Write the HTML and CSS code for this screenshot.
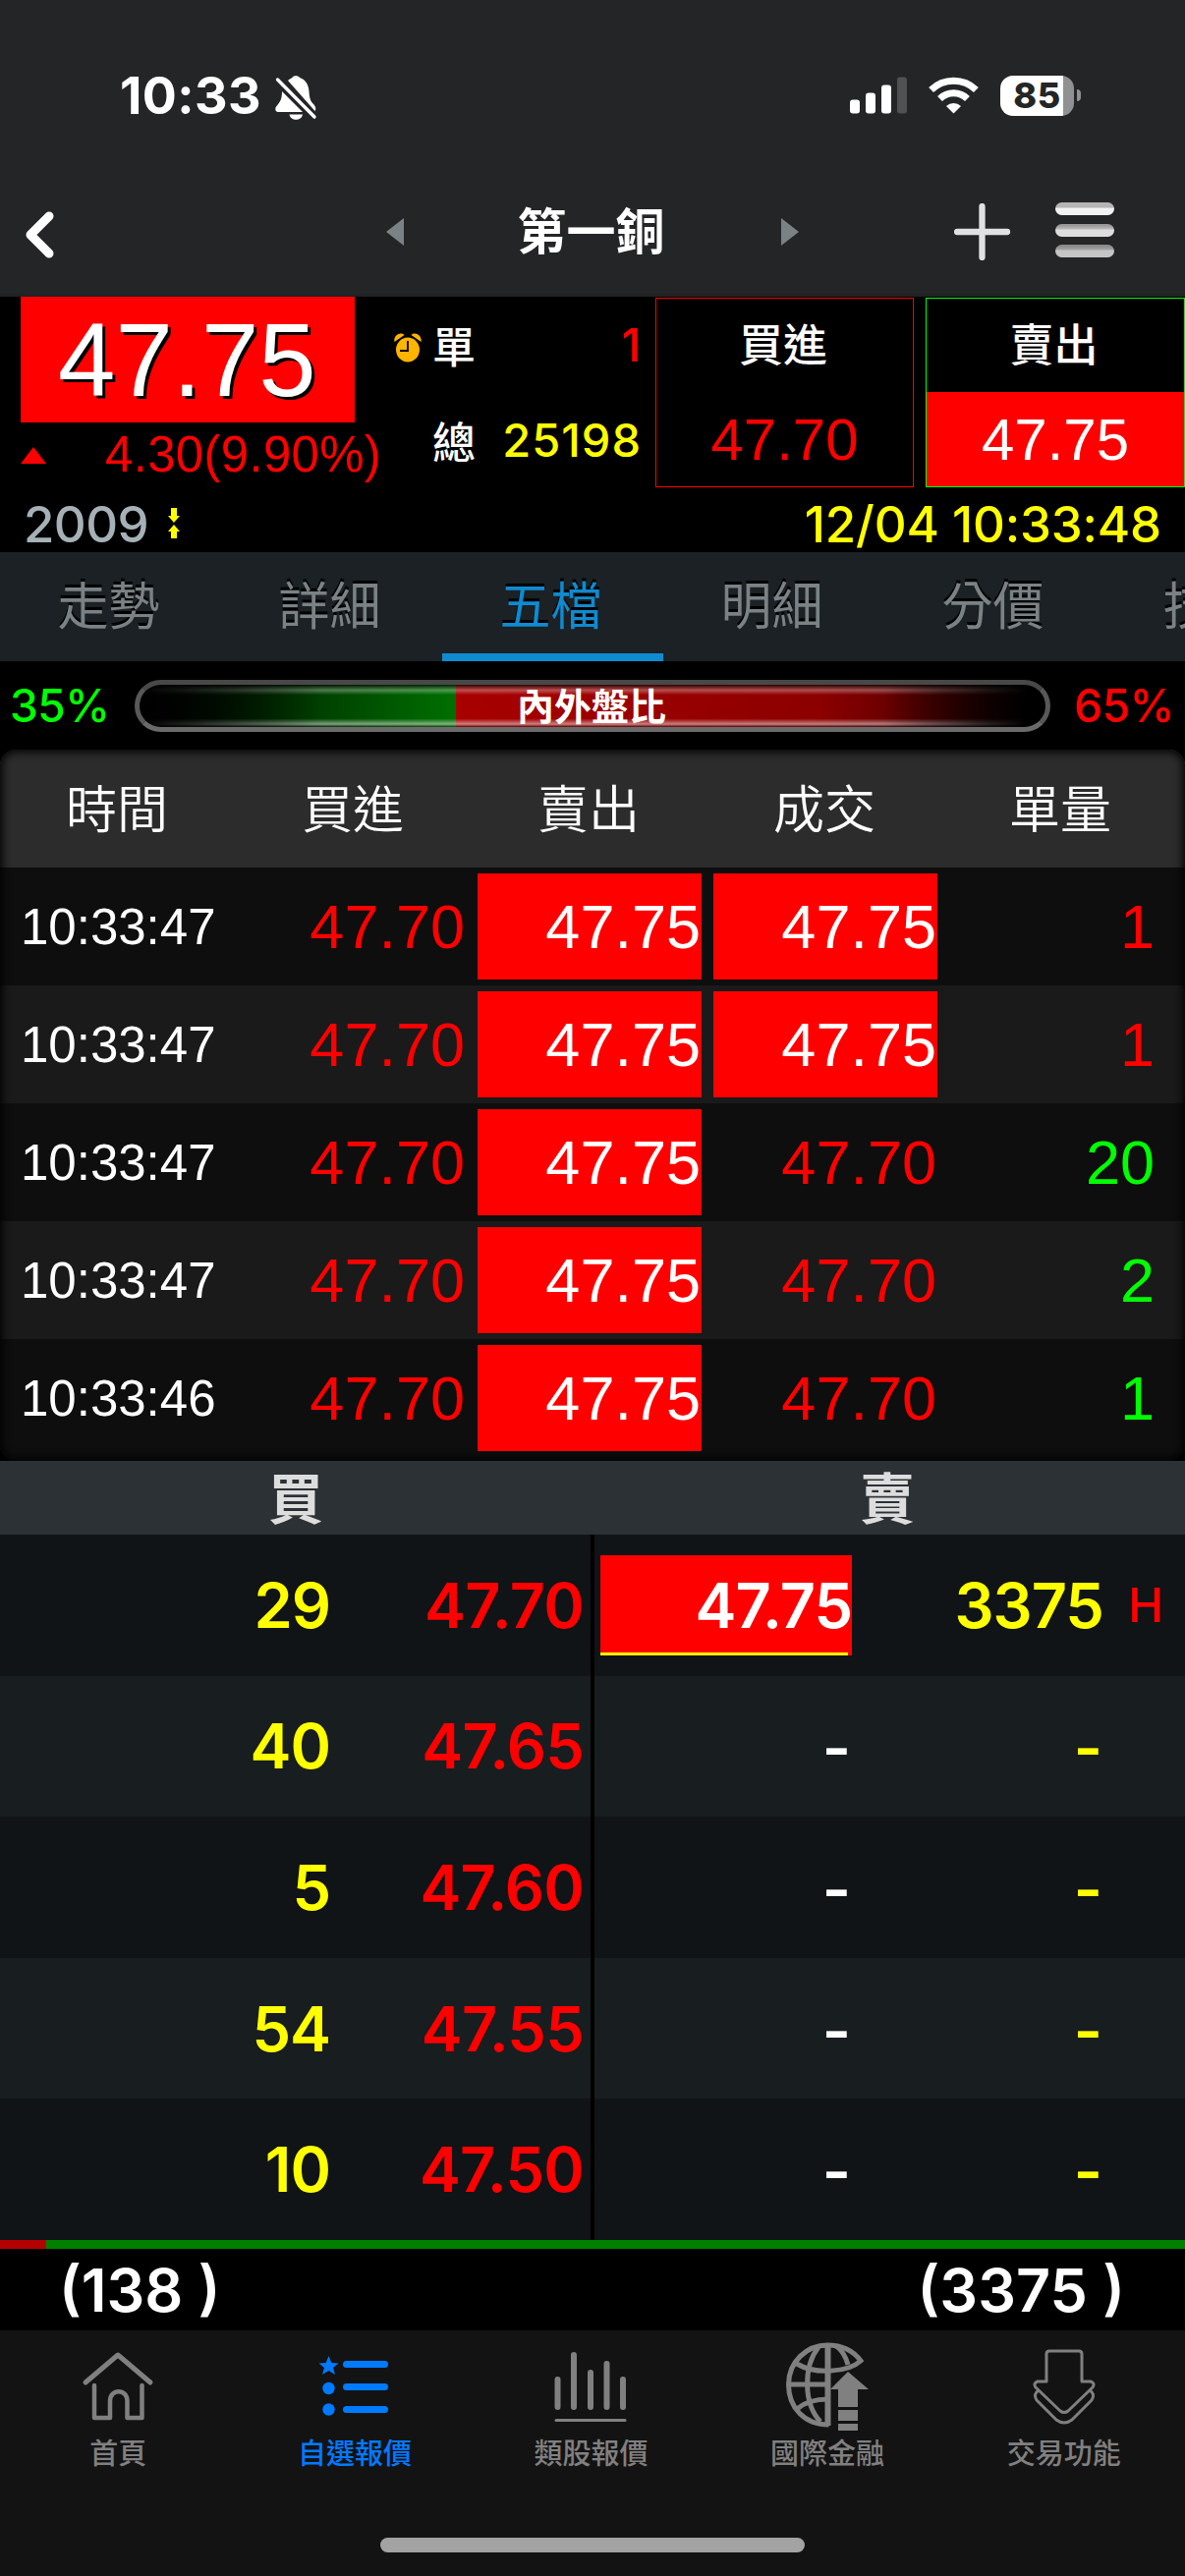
FILE: index.html
```html
<!DOCTYPE html>
<html lang="zh-Hant">
<head>
    <meta charset="UTF-8">
    <meta name="viewport" content="width=device-width, initial-scale=1.0">
    <title>第一銅</title>
    <link rel="stylesheet" href="styles.css">
</head>
<body>
    <header>
        <div class="status">
            <div class="clock">
                <span class="clock-time">10:33</span>
                <svg class="bell" width="44" height="46" viewBox="0 0 44 46">
                    <path fill="#fff" d="M14 6 C16 4 18 3.600 18.500 3 C19 0.500 25 0.500 26 3 C32 5 35 10 35.500 17 C36 24 37 27 40 30 C43 33 42.500 36 41.500 37 Z"/>
                    <path fill="#fff" d="M8 17 L29 38 L4 38 C1 38 0.500 34 2.500 32 C6 28 8 25 8 17 Z"/>
                    <path fill="#fff" d="M15.500 40.500 H29 C28 47.500 16.500 47.500 15.500 40.500 Z"/>
                    <path stroke="#232526" stroke-width="8" d="M3 4 L41 43"/>
                    <path stroke="#fff" stroke-width="3.400" stroke-linecap="round" d="M3.500 5 L41 43"/>
                </svg>
            </div>
            <div class="signals">
                <svg width="58" height="38" viewBox="0 0 58 38" fill="#fff">
                    <rect x="0" y="23.500" width="10" height="14" rx="3"/>
                    <rect x="16" y="16.500" width="10" height="21" rx="3"/>
                    <rect x="32" y="8.500" width="10" height="29" rx="3"/>
                    <rect x="48" y="0.500" width="10" height="37" rx="3" fill="#505153"/>
                </svg>
                <svg class="wifi" width="51" height="38" viewBox="0 0 51 38">
                    <g fill="none" stroke="#fff" stroke-width="7">
                        <path d="M2.600 13.500 A33 33 0 0 1 48.400 13.500"/>
                        <path d="M11.500 22.500 A20 20 0 0 1 39.500 22.500"/>
                    </g>
                    <path fill="#fff" d="M25.500 37.500 L18 30 A11 11 0 0 1 33 30 Z"/>
                </svg>
                <div class="battery"><span>85</span></div>
                <div class="battery-tip"></div>
            </div>
        </div>
        <nav class="title-bar">
            <svg class="back" width="32" height="50" viewBox="0 0 32 50">
                <path d="M25 6 L6 25 L25 44" fill="none" stroke="#fff" stroke-width="9" stroke-linecap="round" stroke-linejoin="round"/>
            </svg>
            <div class="stock">
                <i class="arrow-left"></i>
                <h1>第一銅</h1>
                <i class="arrow-right"></i>
            </div>
            <div class="actions">
                <svg width="58" height="58" viewBox="0 0 58 58">
                    <path d="M3 29 H54 M28.500 3 V55" stroke="#e1e1e1" stroke-width="6.300" stroke-linecap="round"/>
                </svg>
                <div class="menu">
                    <i class="menu-1"></i>
                    <i class="menu-2"></i>
                    <i class="menu-3"></i>
                </div>
            </div>
        </nav>
    </header>

    <!-- 報價 -->
    <section class="quote">
        <div class="quote-top">
            <div class="price">
                <div class="price-now">47.75</div>
                <div class="price-diff"><i class="up"></i><span>4.30(9.90%)</span></div>
            </div>
            <div class="volume">
                <div class="volume-row">
                    <svg width="28" height="30" viewBox="0 0 28 30">
                        <ellipse cx="14" cy="17" rx="12" ry="12.500" fill="#ffb400"/>
                        <path d="M0.500 9 C-1 3 6 -2 10.500 2 Z M27.500 9 C29 3 22 -2 17.500 2 Z" fill="#ffb400"/>
                        <path d="M14 8 V18 H6" fill="none" stroke="#000" stroke-width="1.800"/>
                    </svg>
                    <span class="label">單</span>
                    <span class="num red">1</span>
                </div>
                <div class="volume-row">
                    <span class="label">總</span>
                    <span class="num yellow">25198</span>
                </div>
            </div>
            <div class="side buy">
                <div class="side-name">買進</div>
                <div class="side-price">47.70</div>
            </div>
            <div class="side sell">
                <div class="side-name">賣出</div>
                <div class="side-price hit">47.75</div>
            </div>
        </div>
        <div class="quote-bottom">
            <span class="code">2009</span>
            <svg width="14" height="36" viewBox="0 0 14 36" fill="#ff0">
                <path d="M4 0 H10 V8 H13 L7 15 L1 8 H4 Z M4 31 H10 V24 H13 L7 17 L1 24 H4 Z"/>
            </svg>
            <span class="datetime">12/04 10:33:48</span>
        </div>
    </section>

    <nav class="tabs">
        <a>走勢</a>
        <a>詳細</a>
        <a class="active">五檔</a>
        <a>明細</a>
        <a>分價</a>
        <a>技術</a>
    </nav>

    <!-- 內外盤比 -->
    <section class="ratio">
        <span class="ratio-in">35%</span>
        <div class="ratio-bar"><b>內外盤比</b></div>
        <span class="ratio-out">65%</span>
    </section>

    <!-- 成交明細 -->
    <section class="ticks">
        <div class="tick head"><span>時間</span><span>買進</span><span>賣出</span><span>成交</span><span>單量</span></div>
        <div class="tick"><span class="time">10:33:47</span><span>47.70</span><span class="hit">47.75</span><span class="hit">47.75</span><span class="qty">1</span></div>
        <div class="tick"><span class="time">10:33:47</span><span>47.70</span><span class="hit">47.75</span><span class="hit">47.75</span><span class="qty">1</span></div>
        <div class="tick"><span class="time">10:33:47</span><span>47.70</span><span class="hit">47.75</span><span>47.70</span><span class="qty green">20</span></div>
        <div class="tick"><span class="time">10:33:47</span><span>47.70</span><span class="hit">47.75</span><span>47.70</span><span class="qty green">2</span></div>
        <div class="tick"><span class="time">10:33:46</span><span>47.70</span><span class="hit">47.75</span><span>47.70</span><span class="qty green">1</span></div>
    </section>

    <!-- 五檔 -->
    <section class="depth">
        <div class="depth-head"><span>買</span><span>賣</span></div>
        <div class="depth-body">
            <div class="bids">
                <div class="level"><span class="vol">29</span><span class="bid">47.70</span></div>
                <div class="level"><span class="vol">40</span><span class="bid">47.65</span></div>
                <div class="level"><span class="vol">5</span><span class="bid">47.60</span></div>
                <div class="level"><span class="vol">54</span><span class="bid">47.55</span></div>
                <div class="level"><span class="vol">10</span><span class="bid">47.50</span></div>
            </div>
            <div class="asks">
                <div class="level"><span class="ask full">47.75</span><span class="vol">3375</span><span class="high">H</span></div>
                <div class="level empty"><span class="ask">-</span><span class="vol">-</span></div>
                <div class="level empty"><span class="ask">-</span><span class="vol">-</span></div>
                <div class="level empty"><span class="ask">-</span><span class="vol">-</span></div>
                <div class="level empty"><span class="ask">-</span><span class="vol">-</span></div>
            </div>
        </div>
        <div class="depth-bar"><i style="width: 47px"></i></div>
        <div class="depth-sum"><span>(138 )</span><span>(3375 )</span></div>
    </section>

    <footer>
        <nav class="tabbar">
            <a>
                <svg width="90" height="92" viewBox="0 0 90 92" fill="none" stroke="#808080" stroke-width="5" stroke-linecap="round" stroke-linejoin="round">
                    <path d="M12 41 L45 13 L78 41"/>
                    <path stroke-width="4.500" d="M21 44 V77 H37 V60 C37 47 54.500 47 54.500 60 V77 H69.500 V44"/>
                </svg>
                <span>首頁</span>
            </a>
            <a class="active">
                <svg width="90" height="92" viewBox="0 0 90 92" fill="#007aff">
                    <path d="M18.500 14 L21.300 21 L28.500 21.500 L23 26 L25 33 L18.500 29 L12 33 L14 26 L8.500 21.500 L15.700 21 Z"/>
                    <ellipse cx="18.500" cy="47" rx="6.200" ry="6.200"/>
                    <ellipse cx="18.500" cy="68.500" rx="6.200" ry="6.200"/>
                    <rect x="33" y="19" width="46" height="7" rx="3.500"/>
                    <rect x="33" y="42" width="46" height="7" rx="3.500"/>
                    <rect x="33" y="65" width="46" height="7" rx="3.500"/>
                </svg>
                <span>自選報價</span>
            </a>
            <a>
                <svg width="90" height="92" viewBox="0 0 90 92" stroke="#808080" stroke-width="6" stroke-linecap="round">
                    <path d="M11.500 38 V66 M28 13 V66 M45 31 V66 M61.500 22 V66 M78 38 V66"/>
                    <path stroke-width="3" d="M10 79.500 H80"/>
                </svg>
                <span>類股報價</span>
            </a>
            <a>
                <svg width="90" height="92" viewBox="0 0 90 92" fill="none" stroke="#808080" stroke-width="5">
                    <path d="M46.500 84 C22 84 5.500 67 5.500 43 C5.500 20 24 3 45 3 C59 3 71 8 79 19 C66 31 32 33 14 22"/>
                    <path stroke-width="6" d="M45.500 1 V85"/>
                    <path d="M36 5 C21 24 20 62 38 81 M54 4 C60 8 64 16 66 23 M5 43 H46 M14 68 C22 61 34 58 46 58"/>
                    <path stroke="none" fill="#808080" d="M66 30 L87 48 H76 V66 H56 V48 H48 Z M56 69 H76 V80 H56 Z M56 83 H76 V90 H56 Z"/>
                </svg>
                <span>國際金融</span>
            </a>
            <a>
                <svg width="90" height="92" viewBox="0 0 90 92" fill="none" stroke="#808080" stroke-width="3" stroke-linejoin="round">
                    <path d="M30 9 H60 Q63 9 63 12 V40 H72 Q77 42 74 46 L49 70 Q45 73 41 70 L16 46 Q13 42 18 40 H27 V12 Q27 9 30 9 Z"/>
                    <path d="M19 49 Q13 53 17 59 L37 79 Q45 85 53 79 L73 59 Q77 53 71 49"/>
                </svg>
                <span>交易功能</span>
            </a>
        </nav>
        <div class="home-indicator"></div>
    </footer>
</body>
</html>
```
FILE: styles.css
```css
* {
    box-sizing: border-box;
}

body {
    margin: 0;
    width: 1206px;
    height: 2622px;
    overflow: hidden;
    background: #000;
    color: #fff;
    font-family: Inter, "Noto Sans CJK TC", sans-serif;
    display: flex;
    flex-direction: column;
}

svg {
    display: block;
    flex: none;
}

.red {
    color: #f00;
}

.yellow {
    color: #ff0;
}

/* 頂部 */
header {
    height: 302px;
    background: #232526;
    border-bottom: 3px solid #212224;
}

.status {
    height: 176px;
    padding: 76px 106px 0 122px;
    display: flex;
    justify-content: space-between;
    align-items: flex-start;
}

.clock {
    display: flex;
}

.clock-time {
    width: 157px;
    font-size: 52px;
    line-height: 44px;
    font-weight: 700;
    letter-spacing: 0.4px;
}

.signals {
    display: flex;
    align-items: center;
    height: 42px;
}

.wifi {
    margin-left: 22px;
}

.battery {
    margin-left: 22px;
    width: 75px;
    height: 41px;
    border-radius: 13px;
    background: linear-gradient(to right, #fff 64px, #909192 64px);
    color: #232526;
    font-size: 36px;
    line-height: 41px;
    font-weight: 800;
    letter-spacing: 0.5px;
    text-align: center;
}

.battery-tip {
    margin-left: 3px;
    width: 4px;
    height: 12px;
    border-radius: 0 4px 4px 0;
    background: #909192;
}

.title-bar {
    height: 120px;
    padding: 0 72px 0 25px;
    display: grid;
    grid-template-columns: 1fr 420px 1fr;
    align-items: center;
}

.back {
    margin-top: 6px;
}

.stock {
    display: flex;
    justify-content: space-between;
    align-items: center;
    position: relative;
    left: 23px;
}

.stock h1 {
    margin: 0 0 0 -2px;
    font-size: 50px;
    line-height: 60px;
    font-weight: 700;
}

.arrow-left,
.arrow-right {
    border: 14px solid transparent;
    border-width: 14px 0;
}

.arrow-left {
    border-right: 18px solid #7a8285;
}

.arrow-right {
    border-left: 18px solid #7a8285;
}

.actions {
    display: flex;
    justify-content: flex-end;
    gap: 45px;
}

.menu {
    width: 60px;
    margin-bottom: 2px;
    display: flex;
    flex-direction: column;
    justify-content: space-between;
    position: relative;
    top: -1px;
}

.menu i {
    height: 13px;
    border-radius: 7px;
}

.menu-1 {
    background: linear-gradient(#b5b5b5 40%, #f2f2f2 45%);
}

.menu-2 {
    background: linear-gradient(#979797 10%, #bbb 40%, #ddd 45%);
}

.menu-3 {
    background: linear-gradient(#8a8a8a 10%, #a5a5a5 40%, #c5c5c5 45%);
}

/* 報價 */
.quote {
    height: 260px;
}

.quote-top {
    height: 195px;
    display: flex;
}

.price {
    width: 401px;
    padding-left: 21px;
}

.price-now {
    width: 340px;
    height: 128px;
    background: #f00;
    font: 105px/130px "Liberation Sans", sans-serif;
    padding-left: 38px;
    text-shadow: 3px 3px 0 #000;
}

.price-diff {
    height: 66px;
    display: flex;
    align-items: center;
    color: #f00;
    font: 51px/66px "Liberation Sans", sans-serif;
    letter-spacing: 0.3px;
}

.price-diff span {
    margin-left: 60px;
}

.up {
    border: 13px solid transparent;
    border-width: 0 13px;
    border-bottom: 17px solid #f00;
}

.volume {
    width: 266px;
    padding-right: 14px;
}

.volume-row {
    height: 97px;
    display: flex;
    align-items: center;
}

.volume-row svg {
    margin: 7px -28px 0 0;
}

.label {
    margin-left: 39px;
    font-size: 44px;
    font-weight: 500;
}

.num {
    margin-left: auto;
    font-size: 47px;
    font-weight: 500;
    letter-spacing: 1px;
}

.side {
    width: 263px;
    height: 193px;
    margin: 1px 12px 0 0;
    border: 1px solid #f00;
    text-align: center;
}

.side.sell {
    width: 264px;
    margin-right: 0;
    border-color: #0f0;
}

.side-name {
    height: 95px;
    padding-right: 3px;
    font-size: 45px;
    line-height: 96px;
    font-weight: 500;
}

.side-price {
    height: 96px;
    color: #f00;
    font: 60px/98px "Liberation Sans", sans-serif;
}

.side-price.hit {
    background: #f00;
    color: #fff;
}

.quote-bottom {
    height: 65px;
    padding: 6px 24px 0 24px;
    display: flex;
    align-items: flex-start;
    font-size: 51px;
    line-height: 62px;
    font-weight: 500;
}

.quote-bottom svg {
    margin: 14px 0 0 19px;
}

.code {
    width: 127px;
    color: #a5b1b6;
    letter-spacing: -0.6px;
}

.datetime {
    margin-left: auto;
    color: #ff0;
    letter-spacing: -0.2px;
}

/* 分頁 */
.tabs {
    height: 111px;
    display: flex;
    overflow: hidden;
    background: #1b2124;
}

.tabs a {
    flex: 0 0 225px;
    padding-right: 4px;
    text-align: center;
    font-size: 52px;
    line-height: 112px;
    color: #7a8285;
    text-shadow: 0 -3px 0 #000;
}

.tabs .active {
    color: #0f8bd0;
    border-bottom: 8px solid #0f8bd0;
}

.ratio {
    height: 90px;
    padding: 0 10px;
    display: flex;
    align-items: center;
    justify-content: space-between;
    font-size: 46px;
    font-weight: 500;
}

.ratio-in {
    color: #0f0;
}

.ratio-out {
    color: #f00;
}

.ratio span {
    width: 103px;
    letter-spacing: -0.5px;
}

.ratio-bar {
    width: 932px;
    height: 53px;
    border: 5px solid #555;
    border-color: #484848 #585858 #6a6a6a;
    border-radius: 27px;
    background:
        linear-gradient(to right, #000, transparent 20%, transparent 82%, #000 98%),
        linear-gradient(rgba(0, 0, 0, .7) 0, rgba(255, 255, 255, .3) 13%, transparent 24%, transparent 80%, rgba(255, 255, 255, .5) 93%, rgba(0, 0, 0, .4) 100%),
        linear-gradient(to right, #000, #007000 322px, #a80000 322px, #8c0000 75%, #200000);
    text-align: center;
}

.ratio-bar b {
    display: block;
    padding-right: 2px;
    font-size: 38px;
    line-height: 44px;
}

/* 成交明細 */
.ticks {
    height: 724px;
    border-radius: 16px;
    overflow: hidden;
    background: #0e0e0e;
    position: relative;
}

.ticks::after {
    content: "";
    position: absolute;
    inset: 0;
    border-radius: 16px;
    box-shadow: inset 0 0 10px 2px #000;
}

.tick {
    height: 120px;
    padding: 6px 6px 6px 0;
    display: grid;
    grid-template-columns: repeat(5, 1fr);
    background: #0e0e0e;
}

.tick:nth-child(odd) {
    background: #1a1a1a;
}

.tick span {
    margin: 0 6px;
    padding-right: 1px;
    text-align: right;
    color: #f00;
    font: 63px/109px "Liberation Sans", sans-serif;
}

.tick .hit {
    height: 108px;
    background: #f00;
    color: #fff;
}

.tick .time {
    margin-left: 21px;
    text-align: left;
    color: #fff;
    font-size: 51px;
}

.tick .qty {
    padding-right: 19px;
}

.tick .green {
    color: #0f0;
}

.tick.head {
    background: #2c2c2c;
}

.tick.head span {
    padding-right: 2px;
    color: #fff;
    font: 52px/104px "Noto Sans CJK TC", sans-serif;
    font-weight: 350;
    text-align: center;
}

/* 五檔 */
.depth-head {
    height: 75px;
    padding-right: 2px;
    display: grid;
    grid-template-columns: 1fr 1fr;
    text-align: center;
    background: #2c3136;
    color: #ddd;
    font-size: 56px;
    line-height: 78px;
    font-weight: 700;
}

.depth-body {
    height: 718px;
    display: grid;
    grid-template-columns: 1fr 1fr;
    gap: 4px;
}

.bids,
.asks {
    display: grid;
    grid-template-rows: repeat(5, 1fr);
    font-size: 63px;
    font-weight: 600;
    letter-spacing: -1px;
}

.level {
    display: flex;
    align-items: center;
    background: #101416;
}

.level:nth-child(even) {
    background: #181d20;
}

.vol {
    width: 336px;
    text-align: right;
    color: #ff0;
}

.bid {
    width: 258px;
    text-align: right;
    color: #f00;
    letter-spacing: -0.8px;
}

.ask {
    width: 256px;
    margin-left: 6px;
    text-align: right;
    line-height: 102px;
}

.asks .vol {
    width: 256px;
}

.ask.full {
    background: linear-gradient(#ff0, #ff0) left bottom / 252px 3px no-repeat #f00;
}

.empty span {
    padding: 4px 2px 0 0;
}

.high {
    margin-left: 25px;
    color: #f00;
    font-size: 48px;
    font-weight: 500;
}

.depth-bar {
    height: 9px;
    background: #008000;
}

.depth-bar i {
    display: block;
    height: 9px;
    background: #b40000;
}

.depth-sum {
    height: 83px;
    padding: 0 61px 0 60px;
    display: flex;
    justify-content: space-between;
    font-size: 61px;
    line-height: 84px;
    font-weight: 600;
}

/* 底部選單 */
footer {
    height: 250px;
    background: #131313;
}

.tabbar {
    height: 211px;
    padding: 12px 3px 0 0;
    display: grid;
    grid-template-columns: repeat(5, 1fr);
}

.tabbar a {
    display: flex;
    flex-direction: column;
    align-items: center;
    color: #808080;
    font-size: 29px;
    line-height: 44px;
    font-weight: 500;
}

.tabbar .active {
    color: #007aff;
}

.home-indicator {
    width: 432px;
    height: 15px;
    margin: 0 auto;
    border-radius: 8px;
    background: #a3a3a3;
}
```
